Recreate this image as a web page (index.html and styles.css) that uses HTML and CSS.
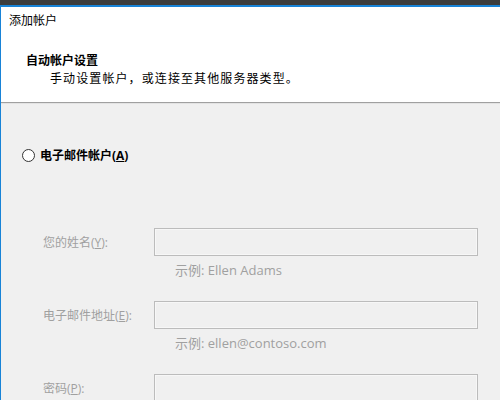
FILE: index.html
```html
<!DOCTYPE html>
<html lang="zh-CN">
<head>
<meta charset="utf-8">
<title>添加帐户</title>
<link rel="stylesheet" href="styles.css">
</head>
<body>
<div class="window">
  <div class="titlebar"></div>
  <div class="header">
    <div class="title">添加帐户</div>
    <div class="heading">自动帐户设置</div>
    <div class="subheading">手动设置帐户，或连接至其他服务器类型。</div>
  </div>
  <div class="content">
    <div class="radio-row">
      <span class="radio"></span>
      <span class="radio-label">电子邮件帐户(<u>A</u>)</span>
    </div>
    <div class="form">
      <div class="field">
        <div class="label">您的姓名(<u>Y</u>):</div>
        <div class="input"></div>
      </div>
      <div class="hint">示例: Ellen Adams</div>
      <div class="field">
        <div class="label">电子邮件地址(<u>E</u>):</div>
        <div class="input"></div>
      </div>
      <div class="hint">示例: ellen@contoso.com</div>
      <div class="field">
        <div class="label">密码(<u>P</u>):</div>
        <div class="input"></div>
      </div>
    </div>
  </div>
</div>
</body>
</html>
```
FILE: styles.css
```css
html, body {
  margin: 0;
  padding: 0;
  width: 500px;
  height: 400px;
  overflow: hidden;
  background: #f0f0f0;
}
.window {
  width: 500px;
  height: 400px;
  box-sizing: border-box;
  border-left: 1px solid #1883d7;
  font-family: "Open Sans", "Noto Sans CJK SC", sans-serif;
  font-size: 12px;
  color: #000;
  background: #f0f0f0;
}
.titlebar {
  height: 5px;
  background: #3c3c3c;
  border-bottom: 2px solid #1883d7;
  margin-left: -1px;
}
.header {
  background: #fff;
  height: 96px;
  box-sizing: border-box;
  border-bottom: 1px solid #a0a0a0;
  padding: 6px 0 0 8px;
}
.title {
  line-height: 16px;
  height: 16px;
}
.heading {
  margin-top: 23px;
  margin-left: 17px;
  font-weight: bold;
  line-height: 18px;
}
.subheading {
  margin-left: 41px;
  line-height: 18px;
  letter-spacing: 1.1px;
}
.content {
  border-top: 1px solid #e3e3e3;
  padding: 42px 0 0 21px;
}
.radio-row {
  display: flex;
  align-items: center;
  gap: 5px;
  height: 18px;
}
.radio {
  width: 11px;
  height: 11px;
  border: 1px solid #333;
  border-radius: 50%;
  background: #fff;
}
.radio-label {
  font-weight: bold;
}
.form {
  margin-top: 64px;
  padding-left: 21px;
  color: #a0a0a0;
}
.field {
  display: flex;
  align-items: center;
  height: 28px;
}
.label {
  width: 111px;
}
.input {
  width: 322px;
  height: 26px;
  border: 1px solid #bcbcbc;
  box-shadow: inset 0 0 0 1px #f7f7f7;
  background: #f0f0f0;
}
.hint {
  margin: 6px 0 23px 132px;
  line-height: 16px;
  font-size: 13px;
}
```
